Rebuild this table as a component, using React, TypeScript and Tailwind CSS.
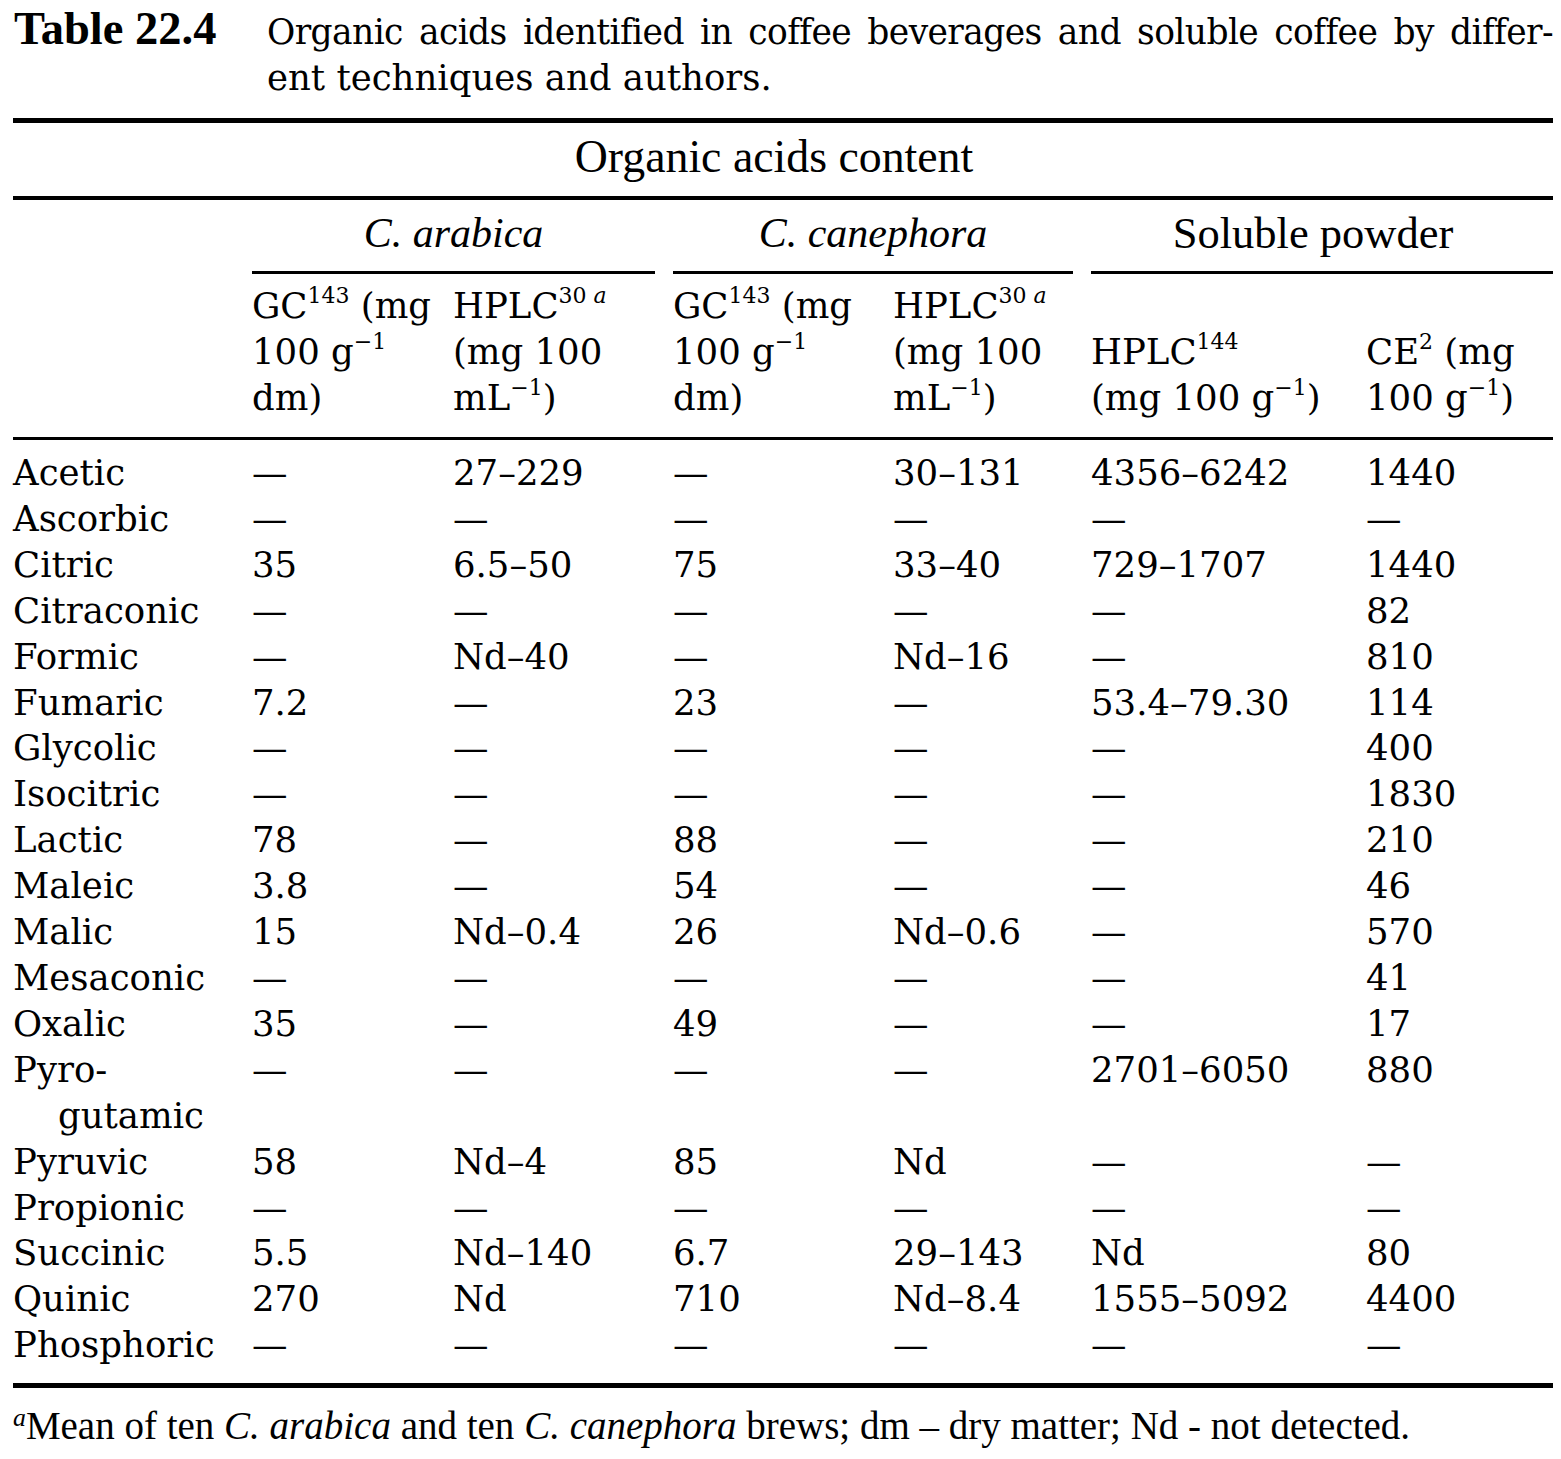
const body = "font-['DejaVu_Serif',serif] text-[35.5px]";
const times = "font-['Liberation_Serif','Times_New_Roman',serif]";

const rows: [string, string[]][] = [
  ["Acetic", ["—", "27–229", "—", "30–131", "4356–6242", "1440"]],
  ["Ascorbic", ["—", "—", "—", "—", "—", "—"]],
  ["Citric", ["35", "6.5–50", "75", "33–40", "729–1707", "1440"]],
  ["Citraconic", ["—", "—", "—", "—", "—", "82"]],
  ["Formic", ["—", "Nd–40", "—", "Nd–16", "—", "810"]],
  ["Fumaric", ["7.2", "—", "23", "—", "53.4–79.30", "114"]],
  ["Glycolic", ["—", "—", "—", "—", "—", "400"]],
  ["Isocitric", ["—", "—", "—", "—", "—", "1830"]],
  ["Lactic", ["78", "—", "88", "—", "—", "210"]],
  ["Maleic", ["3.8", "—", "54", "—", "—", "46"]],
  ["Malic", ["15", "Nd–0.4", "26", "Nd–0.6", "—", "570"]],
  ["Mesaconic", ["—", "—", "—", "—", "—", "41"]],
  ["Oxalic", ["35", "—", "49", "—", "—", "17"]],
  ["Pyro-|gutamic", ["—", "—", "—", "—", "2701–6050", "880"]],
  ["Pyruvic", ["58", "Nd–4", "85", "Nd", "—", "—"]],
  ["Propionic", ["—", "—", "—", "—", "—", "—"]],
  ["Succinic", ["5.5", "Nd–140", "6.7", "29–143", "Nd", "80"]],
  ["Quinic", ["270", "Nd", "710", "Nd–8.4", "1555–5092", "4400"]],
  ["Phosphoric", ["—", "—", "—", "—", "—", "—"]],
];

const cols = "grid grid-cols-[239px_201px_220px_220px_198px_275px_187px]";

function Sup({ children }: { children: React.ReactNode }) {
  return <sup className="text-[0.62em] top-[-0.66em]">{children}</sup>;
}

export default function App() {
  return (
    <div className="w-[1561px] min-h-[1459px] bg-white text-black">
      <div className="pl-[13px] w-[1553px]">
        {/* caption */}
        <div className="h-[118px] pt-[6px]">
          <div className="flex items-baseline leading-[46px]">
            <div className={`${times} w-[254px] shrink-0 pl-px text-[46.5px] font-bold`}>Table 22.4</div>
            <div className="min-w-0 flex-1 font-['DejaVu_Serif',serif] text-[35.5px]">
              <div className="whitespace-nowrap text-[34.5px] tracking-[-0.6px] text-justify [text-align-last:justify]">
                Organic acids identified in coffee beverages and soluble coffee by differ-
              </div>
              <div>ent techniques and authors.</div>
            </div>
          </div>
        </div>

        <div className="h-[5px] bg-black" />
        <div className={`${times} mt-[11px] pr-[18px] text-center text-[45.8px] leading-[46px]`}>
          Organic acids content
        </div>
        <div className="mt-[16px] h-[4px] bg-black" />

        {/* spanners */}
        <div className={`${cols} ${times} mt-[10px] text-[44.5px] leading-[46px]`}>
          <div />
          <div className="col-span-2 mr-[18px] text-center text-[42px] italic">C. arabica</div>
          <div className="col-span-2 mr-[18px] text-center text-[42px] italic">C. canephora</div>
          <div className="col-span-2 pr-[18px] text-center">Soluble powder</div>
        </div>
        <div className={`${cols} mt-[15px]`}>
          <div />
          <div className="col-span-2 mr-[18px] h-[3px] bg-black" />
          <div className="col-span-2 mr-[18px] h-[3px] bg-black" />
          <div className="col-span-2 h-[3px] bg-black" />
        </div>

        {/* column heads */}
        <div className={`${cols} ${body} mt-[9px] h-[138px] items-end leading-[46px] whitespace-nowrap`}>
          <div />
          <div>
            GC<Sup>143</Sup> (mg<br />100 g<Sup>−1</Sup><br />dm)
          </div>
          <div>
            HPLC<Sup>30 <i>a</i></Sup><br />(mg 100<br />mL<Sup>−1</Sup>)
          </div>
          <div>
            GC<Sup>143</Sup> (mg<br />100 g<Sup>−1</Sup><br />dm)
          </div>
          <div>
            HPLC<Sup>30 <i>a</i></Sup><br />(mg 100<br />mL<Sup>−1</Sup>)
          </div>
          <div>
            HPLC<Sup>144</Sup><br />(mg 100 g<Sup>−1</Sup>)
          </div>
          <div>
            CE<Sup>2</Sup> (mg<br />100 g<Sup>−1</Sup>)
          </div>
        </div>
        <div className="mt-[16px] h-[3px] bg-black" />

        {/* body */}
        <div className={`${body} mt-[10px] leading-[45.9px]`}>
          {rows.map(([name, vals]) => (
            <div key={name} className={cols}>
              <div className="whitespace-nowrap">
                {name.includes("|") ? (
                  <>
                    <div>{name.split("|")[0]}</div>
                    <div className="pl-[45px]">{name.split("|")[1]}</div>
                  </>
                ) : (
                  name
                )}
              </div>
              {vals.map((v, i) => (
                <div key={i} className="whitespace-nowrap">{v}</div>
              ))}
            </div>
          ))}
        </div>

        <div className="mt-[15px] h-[5px] bg-black" />
        <div className={`${times} mt-[15px] text-[39px] leading-[46px] whitespace-nowrap`}>
          <sup className="text-[0.66em] top-[-0.5em] italic">a</sup>Mean of ten <i>C. arabica</i> and ten{" "}
          <i>C. canephora</i> brews; dm – dry matter; Nd - not detected.
        </div>
      </div>
    </div>
  );
}
